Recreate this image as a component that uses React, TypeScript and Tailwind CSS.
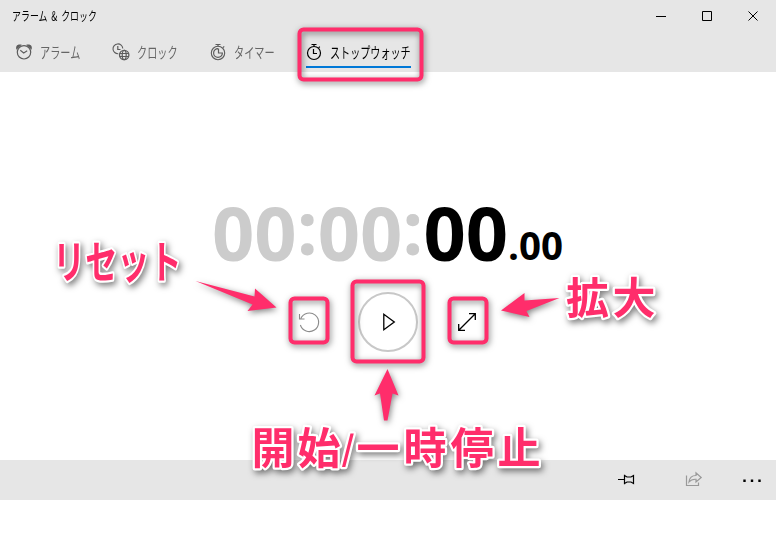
import React from "react";

const jp = "font-['Noto_Sans_CJK_JP','Noto_Sans',sans-serif]";

function AlarmIcon() {
  return (
    <svg width="18" height="18" viewBox="0 0 18 18" fill="none" stroke="#5c5c5c">
      <circle cx="9" cy="9.300" r="6.700" strokeWidth="1.200" />
      <path d="M5.300 7.300 8.700 10l3.500-2.200" strokeWidth="1.100" />
      <path d="M1.500 6.800C.2 3 2.500.5 6.800 1.800ZM16.500 6.800c1.300-3.800-1-6.300-5.300-5Z" fill="#5c5c5c" stroke="none" />
    </svg>
  );
}

function ClockIcon() {
  return (
    <svg width="18" height="18" viewBox="0 0 18 18" fill="none" stroke="#5c5c5c">
      <path d="M6.300 10.700A4.900 4.900 0 1 1 10.800 5.500" strokeWidth="1.100" />
      <path d="M5.800 3v3.500h2.700" strokeWidth="1.200" />
      <circle cx="12.200" cy="12" r="4.700" strokeWidth="1.300" />
      <ellipse cx="12.200" cy="12" rx="2" ry="4.700" strokeWidth="1.200" />
      <path d="M7.700 10.500h9M7.700 13.500h9" strokeWidth="1.200" />
    </svg>
  );
}

function TimerIcon() {
  return (
    <svg width="18" height="18" viewBox="0 0 18 18" fill="none" stroke="#5c5c5c">
      <circle cx="9" cy="10" r="6.700" strokeWidth="1.100" />
      <path d="M9 5.600A4.400 4.400 0 1 0 13.400 10H9.500V5.600" strokeWidth="1.200" />
      <path d="M6.500 1.500h5M9 1.500v2M14 4.600l1.200-1.200" strokeWidth="1.200" />
    </svg>
  );
}

function StopwatchIcon() {
  return (
    <svg width="18" height="18" viewBox="0 0 18 18" fill="none" stroke="#000">
      <circle cx="9" cy="10" r="6.500" strokeWidth="1.200" />
      <path d="M6.500 1.500h5M9 1.500v2M13.600 4.800l1.200-1.200M8.500 6v4.500h3.500" strokeWidth="1.200" />
    </svg>
  );
}

function Tab({ icon, label, active }: { icon: React.ReactNode; label: string; active?: boolean }) {
  return (
    <div className={active ? "relative h-10 w-[104px]" : "relative h-10 w-[66px]"}>
      <div className="flex h-10 items-center">
        <span className="-ml-[1px] w-[25px] shrink-0">{icon}</span>
        <span
          className={
            active
              ? "origin-left scale-x-[0.695] whitespace-nowrap text-[14.500px] font-normal text-black"
              : "origin-left scale-x-[0.7] whitespace-nowrap text-[14.500px] font-normal text-[#666]"
          }
        >
          {label}
        </span>
      </div>
      {active && <div className="absolute bottom-[4px] left-0 h-[2px] w-[105px] bg-[#0078d7]" />}
    </div>
  );
}

function Header() {
  return (
    <header className="h-[72px] bg-[#e6e6e6]">
      <div className="flex h-8 items-center justify-between pl-3">
        <h1 className="origin-left scale-x-[0.715] whitespace-nowrap text-[12.500px] font-normal text-black [word-spacing:2.500px]">
          アラーム &amp; クロック
        </h1>
        <svg width="138" height="32" viewBox="0 0 138 32" fill="none" stroke="#000">
          <path d="M18 16.500h10M64.500 11.500h9v9h-9ZM110.500 11.500l9 9M119.500 11.500l-9 9" />
        </svg>
      </div>
      <nav className="flex h-10 pl-4">
        <div className="flex gap-[31px]">
          <Tab icon={<AlarmIcon />} label="アラーム" />
          <Tab icon={<ClockIcon />} label="クロック" />
          <Tab icon={<TimerIcon />} label="タイマー" />
        </div>
        <div className="ml-[30px]">
          <Tab icon={<StopwatchIcon />} label="ストップウォッチ" active />
        </div>
      </nav>
    </header>
  );
}

function TimeDisplay() {
  return (
    <div className="flex h-[74px] items-baseline pl-[212px] font-['Open_Sans',sans-serif] text-[74px] leading-[74px] font-bold text-[#ccc]">
      <span>00</span>
      <span className="relative -top-[6px]">:</span>
      <span>00</span>
      <span className="relative -top-[6px]">:</span>
      <span className="text-black">00</span>
      <span className="relative -top-px text-[38.500px] leading-none text-black">.00</span>
    </div>
  );
}

function Controls() {
  return (
    <div className="flex h-[60px] items-center pl-[297px]">
      <button className="h-6 w-6">
        <svg width="24" height="24" viewBox="0 0 24 24" fill="none" stroke="#8c8c8c">
          <path d="M3.800 8.500A9.300 9.300 0 1 1 3.400 15M2.500 4v5h5" strokeWidth="1.100" />
        </svg>
      </button>
      <button className="ml-[37px] h-[60px] w-[60px] rounded-full border-2 border-[#c8c8c8]">
        <svg width="56" height="56" viewBox="0 0 56 56" fill="none" stroke="#000">
          <path d="M23.800 20.200v15.500L34.300 28Z" strokeWidth="1.300" />
        </svg>
      </button>
      <button className="ml-[37px] h-6 w-6">
        <svg width="24" height="24" viewBox="0 0 24 24" fill="none" stroke="#000" strokeWidth="1.300">
          <path d="M4 20 20 4M14 3.700h6.300V10M3.700 14v6.300H10" />
        </svg>
      </button>
    </div>
  );
}

function Footer() {
  return (
    <footer className="flex h-10 items-center justify-end bg-[#e6e6e6]">
      <svg width="176" height="40" viewBox="0 0 176 40" fill="none">
        <path d="M18 19.500h6M24.500 14.800v9.500M24.500 15.500l2.500 1.500h4l2.500-1.500v8L31 22h-4l-2.500 1.500" stroke="#000" strokeWidth="1.200" />
        <path d="M86.500 15.500v10h12v-3M89 22c.5-4.500 3-6.500 7-6.500v-2.700l5.200 4.700-5.200 4.500v-2.700c-3-.2-5 .2-7 2.700Z" stroke="#999" strokeWidth="1.200" />
        <path d="M143.300 19.500h2.400v2.400h-2.400zM150.800 19.500h2.400v2.400h-2.400zM158.300 19.500h2.400v2.400h-2.400z" fill="#000" />
      </svg>
    </footer>
  );
}

function Annotations() {
  return (
    <svg
      className="pointer-events-none absolute inset-0"
      width="776"
      height="537"
      viewBox="0 0 776 537"
      fill="none"
    >
      <g stroke="#ff2d6b" strokeWidth="4" className="[filter:drop-shadow(1px_2px_3px_rgba(0,0,0,0.5))]">
        <rect x="299.500" y="29.500" width="122" height="50" rx="4" />
        <rect x="290.500" y="298.500" width="37" height="44" rx="4" />
        <rect x="352.500" y="281.500" width="71" height="80" rx="4" />
        <rect x="449.500" y="298.500" width="37" height="44" rx="4" />
      </g>
      <g fill="#ff2d6b" className="[filter:drop-shadow(1px_2px_3px_rgba(0,0,0,0.5))]">
        <path d="m195.500 281 59 15.500.5-8 21.500 19-29 3.500 5-6.500Z" />
        <path d="m387.500 369 11 26.500-6-2-5 27h-3.500l-4-27-5.500 2Z" />
        <path d="m559.500 298-35 2.500V293l-23.500 17.500 28.500 6.500-3-6Z" />
      </g>
      <g
        fill="#ff2d6b"
        stroke="#fff"
        strokeWidth="4.500"
        strokeLinejoin="round"
        fontWeight="700"
        className="font-['Noto_Sans_CJK_JP',sans-serif] [filter:drop-shadow(2px_3px_3px_rgba(0,0,0,0.5))] [paint-order:stroke]"
      >
        <text transform="translate(53 279) scale(0.715 1)" fontSize="45">リセット</text>
        <text x="566" y="313.500" fontSize="43" letterSpacing="3.500">拡大</text>
        <text y="463.500" fontSize="43">
          <tspan x="251.500 297.500">開始</tspan>
          <tspan x="341.500" y="460.500" fontSize="34">/</tspan>
          <tspan x="356.500 403.500 450.500 497.500" y="463.500">一時停止</tspan>
        </text>
      </g>
    </svg>
  );
}

export default function App() {
  return (
    <div className={`relative h-[537px] w-[776px] overflow-hidden bg-white ${jp}`}>
      <Header />
      <main className="flex h-[388px] flex-col pt-[124px]">
        <TimeDisplay />
        <div className="mt-[22px]">
          <Controls />
        </div>
      </main>
      <Footer />
      <Annotations />
    </div>
  );
}
